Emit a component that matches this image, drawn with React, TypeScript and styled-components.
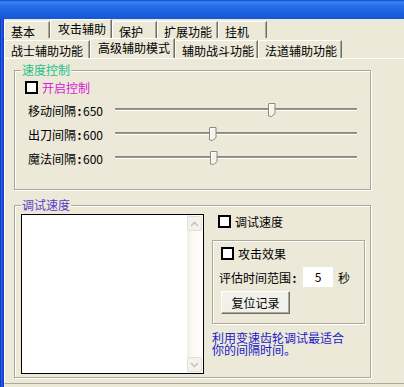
import React from "react";
import styled, { createGlobalStyle } from "styled-components";

const GlobalStyle = createGlobalStyle`
  html, body {
    margin: 0;
    padding: 0;
    background: #ece9d8;
  }
  body {
    font-family: "SimSun", "Noto Sans CJK SC", sans-serif;
    font-size: 12px;
    color: #000;
  }
  * {
    box-sizing: border-box;
  }
`;

const Window = styled.div`
  width: 404px;
  height: 387px;
  overflow: hidden;
  display: flex;
  flex-direction: column;
  background: #ece9d8;
`;

const TitleBar = styled.div`
  height: 19px;
  flex-shrink: 0;
  background: linear-gradient(180deg, #0a4bd0 0, #3d86f2 2px, #2a70ea 5px, #1d62df 12px, #1557d6 100%);
`;

const Body = styled.div`
  display: flex;
  flex: 1;
  min-height: 0;
`;

const FrameEdge = styled.div`
  width: 4px;
  flex-shrink: 0;
  background: linear-gradient(90deg, #0b2fa8 0, #2a5ee6 40%, #1848d8 75%, #0c36b8 100%);
`;

const Client = styled.div`
  flex: 1;
  display: flex;
  flex-direction: column;
`;

const TabRow = styled.div<{ $h: number }>`
  display: flex;
  align-items: flex-end;
  height: ${({ $h }) => $h}px;
  flex-shrink: 0;
`;

const Tab = styled.div<{ $w: number; $active?: boolean }>`
  width: ${({ $w }) => $w}px;
  height: ${({ $active }) => ($active ? "100%" : "calc(100% - 2px)")};
  padding: ${({ $active }) => ($active ? "2px 0 0 7px" : "3px 0 0 6px")};
  line-height: 14px;
  white-space: nowrap;
  border-top: 1px solid #fff;
  border-left: 1px solid #fff;
  border-right: 1px solid #716f64;
  border-top-left-radius: 2px;
  box-shadow: inset -1px 0 0 #aca899;
  position: relative;
  z-index: ${({ $active }) => ($active ? 1 : 0)};
`;

const Page = styled.div`
  height: 326px;
  flex-shrink: 0;
  border-top: 1px solid #fff;
  border-left: 1px solid #fff;
  border-bottom: 1px solid #aca899;
  padding: 3px 0 0 9px;
`;

const GroupBox = styled.fieldset<{ $h: number; $gap?: number }>`
  margin: ${({ $gap }) => $gap ?? 0}px 0 0 0;
  padding: 0;
  min-width: 0;
  width: 357px;
  height: ${({ $h }) => $h}px;
  border: 1px solid #aca899;
  box-shadow: 1px 1px 0 #fff, inset 1px 1px 0 #fff;
`;

const Legend = styled.legend<{ $color: string }>`
  margin-left: 6px;
  padding: 0 1px;
  line-height: 16px;
  color: ${({ $color }) => $color};
  background: #ece9d8;
`;

const CheckRow = styled.label<{ $top: number; $left: number; $color?: string }>`
  display: flex;
  align-items: center;
  gap: 4px;
  height: 15px;
  margin-top: ${({ $top }) => $top}px;
  padding-left: ${({ $left }) => $left}px;
  color: ${({ $color }) => $color ?? "#000"};
  line-height: 15px;
`;

const CheckBox = styled.span`
  width: 13px;
  height: 13px;
  flex-shrink: 0;
  border: 2px solid #000;
  background: #fff;
`;

const SliderList = styled.div`
  margin-top: 3px;
  padding-left: 13px;
  display: flex;
  flex-direction: column;
`;

const SliderRow = styled.div`
  display: grid;
  grid-template-columns: 87px 242px;
  align-items: center;
  height: 24px;
`;

const SliderLabel = styled.span`
  white-space: nowrap;
  line-height: 14px;
  padding-top: 2px;
`;

const Colon = styled.span`
  display: inline-block;
  width: 7px;
  text-align: center;
  font-weight: bold;
`;

const Track = styled.div`
  position: relative;
  height: 15px;
`;

const TrackLine = styled.div`
  margin-top: 5px;
  height: 3px;
  background: #9d9b8f;
  border-top: 1px solid #8a887c;
  border-bottom: 1px solid #fff;
`;

const ThumbMark = styled.svg`
  position: absolute;
  top: 0;
  width: 8px;
  height: 14px;
`;

const DebugContent = styled.div`
  display: flex;
  padding: 1px 0 0 6px;
`;

const ListBox = styled.div`
  width: 183px;
  height: 160px;
  flex-shrink: 0;
  border: 1px solid #000;
  background: #fff;
  display: flex;
  justify-content: flex-end;
`;

const ScrollBar = styled.div`
  width: 16px;
  height: 100%;
  background: linear-gradient(90deg, #f1efe6 0, #fbfaf6 40%, #fdfdfb 100%);
  display: flex;
  flex-direction: column;
  justify-content: space-between;
  padding: 1px 0;
`;

const ScrollBtn = styled.div`
  width: 15px;
  height: 15px;
  border: 1px solid #e3e1d6;
  border-radius: 2px;
  background: #f3f2ec;
  display: flex;
  align-items: center;
  justify-content: center;
`;

const RightCol = styled.div`
  width: 153px;
  margin-left: 8px;
  display: flex;
  flex-direction: column;
`;

const InnerBox = styled.div`
  margin-top: 11px;
  width: 153px;
  height: 84px;
  border: 1px solid #aca899;
  box-shadow: 1px 1px 0 #fff, inset 1px 1px 0 #fff;
  padding-left: 8px;
  display: flex;
  flex-direction: column;
  align-items: flex-start;
`;

const FieldRow = styled.div`
  display: flex;
  align-items: center;
  height: 20px;
  margin: 6px 0 0 -2px;
  white-space: nowrap;
`;

const NumInput = styled.div`
  width: 30px;
  height: 20px;
  margin-left: 5px;
  background: #fff;
  text-align: center;
  line-height: 20px;
`;

const Unit = styled.span`
  margin-left: 5px;
`;

const Button = styled.div`
  margin-top: 4px;
  width: 69px;
  height: 23px;
  display: flex;
  align-items: center;
  justify-content: center;
  border: 1px solid;
  border-color: #fff #716f64 #716f64 #fff;
  box-shadow: inset -1px -1px 0 #aca899;
  background: #f1f0ea;
`;

const Hint = styled.div`
  margin-top: 8px;
  width: 140px;
  line-height: 12px;
  color: #2020c8;
`;

const tabsTop = [
  { t: "基本", w: 46 },
  { t: "攻击辅助", w: 62, active: true },
  { t: "保护", w: 45 },
  { t: "扩展功能", w: 61 },
  { t: "挂机", w: 49 },
];

const tabsSub = [
  { t: "战士辅助功能", w: 86 },
  { t: "高级辅助模式", w: 85, active: true },
  { t: "辅助战斗功能", w: 83 },
  { t: "法道辅助功能", w: 84 },
];

const sliders = [
  { name: "移动间隔", val: "650", pos: 0.65 },
  { name: "出刀间隔", val: "600", pos: 0.405 },
  { name: "魔法间隔", val: "600", pos: 0.41 },
];

function Thumb({ pos }: { pos: number }) {
  return (
    <ThumbMark viewBox="0 0 8 14" style={{ left: Math.round(pos * 242) - 4 }}>
      <path d="M0.5 13 V1 Q0.5 0.5 1 0.5 H7 V10.5 L3.5 13.5 Z" fill="#f4f3ee" stroke="#8c8a7e" />
      <path d="M1.5 12 V1.5 H6" fill="none" stroke="#fff" />
    </ThumbMark>
  );
}

function Chevron({ up }: { up?: boolean }) {
  return (
    <svg width="9" height="6" viewBox="0 0 9 6">
      <path
        d={up ? "M1 5 L4.5 1.5 L8 5" : "M1 1 L4.5 4.5 L8 1"}
        fill="none"
        stroke="#c9c6b8"
        strokeWidth="1.6"
      />
    </svg>
  );
}

export default function App() {
  return (
    <>
      <GlobalStyle />
      <Window>
        <TitleBar />
        <Body>
          <FrameEdge />
          <Client>
            <TabRow $h={19}>
              {tabsTop.map((tab) => (
                <Tab key={tab.t} $w={tab.w} $active={tab.active}>
                  {tab.t}
                </Tab>
              ))}
            </TabRow>
            <TabRow $h={20}>
              {tabsSub.map((tab) => (
                <Tab key={tab.t} $w={tab.w} $active={tab.active}>
                  {tab.t}
                </Tab>
              ))}
            </TabRow>
            <Page>
              <GroupBox $h={128}>
                <Legend $color="#22c08a">速度控制</Legend>
                <CheckRow $top={2} $left={10} $color="#dc18dc">
                  <CheckBox />
                  开启控制
                </CheckRow>
                <SliderList>
                  {sliders.map((s) => (
                    <SliderRow key={s.name}>
                      <SliderLabel>
                        {s.name}
                        <Colon>:</Colon>
                        {s.val}
                      </SliderLabel>
                      <Track>
                        <TrackLine />
                        <Thumb pos={s.pos} />
                      </Track>
                    </SliderRow>
                  ))}
                </SliderList>
              </GroupBox>

              <GroupBox $h={181} $gap={7}>
                <Legend $color="#5a3cc8">调试速度</Legend>
                <DebugContent>
                  <ListBox>
                    <ScrollBar>
                      <ScrollBtn>
                        <Chevron up />
                      </ScrollBtn>
                      <ScrollBtn>
                        <Chevron />
                      </ScrollBtn>
                    </ScrollBar>
                  </ListBox>
                  <RightCol>
                    <CheckRow $top={0} $left={6}>
                      <CheckBox />
                      调试速度
                    </CheckRow>
                    <InnerBox>
                      <CheckRow $top={5} $left={0}>
                        <CheckBox />
                        攻击效果
                      </CheckRow>
                      <FieldRow>
                        评估时间范围
                        <Colon>:</Colon>
                        <NumInput>5</NumInput>
                        <Unit>秒</Unit>
                      </FieldRow>
                      <Button>复位记录</Button>
                    </InnerBox>
                    <Hint>利用变速齿轮调试最适合你的间隔时间。</Hint>
                  </RightCol>
                </DebugContent>
              </GroupBox>
            </Page>
          </Client>
        </Body>
      </Window>
    </>
  );
}
